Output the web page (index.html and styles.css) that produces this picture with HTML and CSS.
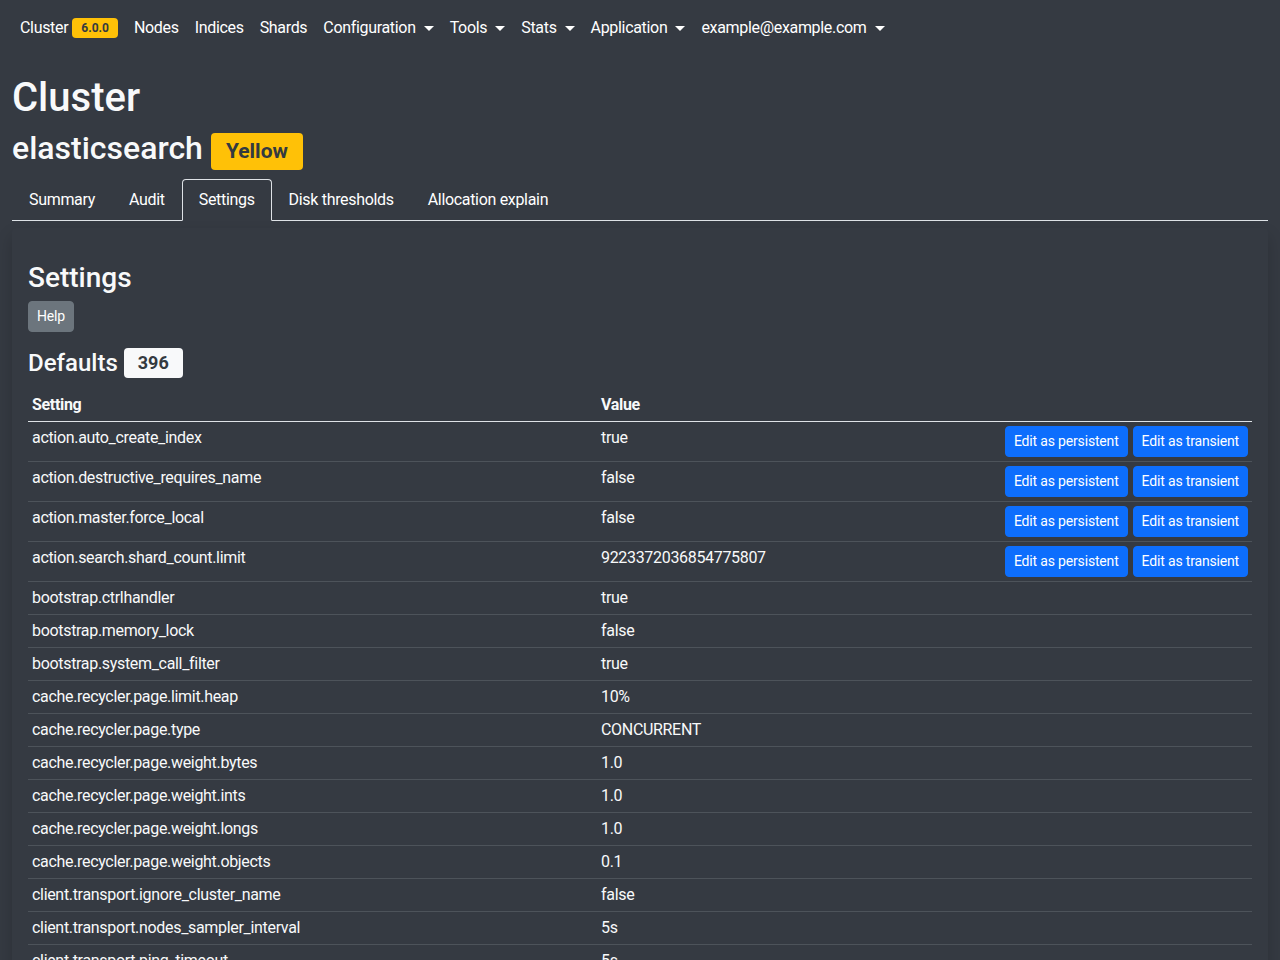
FILE: index.html
```html
<!DOCTYPE html>
<html lang="en">
<head>
<meta charset="utf-8">
<title>Cluster settings</title>
<link rel="stylesheet" href="styles.css">
</head>
<body>
<nav class="navbar">
  <a class="nav-link">Cluster <span class="badge badge-warning badge-nav">6.0.0</span></a>
  <a class="nav-link">Nodes</a>
  <a class="nav-link">Indices</a>
  <a class="nav-link">Shards</a>
  <a class="nav-link dropdown">Configuration</a>
  <a class="nav-link dropdown">Tools</a>
  <a class="nav-link dropdown">Stats</a>
  <a class="nav-link dropdown">Application</a>
  <a class="nav-link dropdown">example@example.com</a>
</nav>
<main class="container">
  <h1 class="title">Cluster</h1>
  <h2 class="subtitle">elasticsearch <span class="badge badge-warning badge-status">Yellow</span></h2>
  <ul class="tabs">
    <li class="tab">Summary</li>
    <li class="tab">Audit</li>
    <li class="tab active">Settings</li>
    <li class="tab">Disk thresholds</li>
    <li class="tab">Allocation explain</li>
  </ul>
  <section class="card">
    <h3 class="card-title">Settings</h3>
    <div class="help-row"><button class="btn btn-secondary">Help</button></div>
    <h4 class="section-title">Defaults <span class="badge badge-light">396</span></h4>
    <table class="table">
      <thead>
        <tr><th class="col-setting">Setting</th><th class="col-value">Value</th><th></th></tr>
      </thead>
      <tbody>
        <tr><td>action.auto_create_index</td><td>true</td><td class="actions"><button class="btn btn-primary">Edit as persistent</button><button class="btn btn-primary">Edit as transient</button></td></tr>
        <tr><td>action.destructive_requires_name</td><td>false</td><td class="actions"><button class="btn btn-primary">Edit as persistent</button><button class="btn btn-primary">Edit as transient</button></td></tr>
        <tr><td>action.master.force_local</td><td>false</td><td class="actions"><button class="btn btn-primary">Edit as persistent</button><button class="btn btn-primary">Edit as transient</button></td></tr>
        <tr><td>action.search.shard_count.limit</td><td>9223372036854775807</td><td class="actions"><button class="btn btn-primary">Edit as persistent</button><button class="btn btn-primary">Edit as transient</button></td></tr>
        <tr><td>bootstrap.ctrlhandler</td><td>true</td><td></td></tr>
        <tr><td>bootstrap.memory_lock</td><td>false</td><td></td></tr>
        <tr><td>bootstrap.system_call_filter</td><td>true</td><td></td></tr>
        <tr><td>cache.recycler.page.limit.heap</td><td>10%</td><td></td></tr>
        <tr><td>cache.recycler.page.type</td><td>CONCURRENT</td><td></td></tr>
        <tr><td>cache.recycler.page.weight.bytes</td><td>1.0</td><td></td></tr>
        <tr><td>cache.recycler.page.weight.ints</td><td>1.0</td><td></td></tr>
        <tr><td>cache.recycler.page.weight.longs</td><td>1.0</td><td></td></tr>
        <tr><td>cache.recycler.page.weight.objects</td><td>0.1</td><td></td></tr>
        <tr><td>client.transport.ignore_cluster_name</td><td>false</td><td></td></tr>
        <tr><td>client.transport.nodes_sampler_interval</td><td>5s</td><td></td></tr>
        <tr><td>client.transport.ping_timeout</td><td>5s</td><td></td></tr>
      </tbody>
    </table>
  </section>
</main>
</body>
</html>
```
FILE: styles.css
```css
* { box-sizing: border-box; }
html, body { margin: 0; padding: 0; }
body {
  background: #353a42;
  color: #f8f9fa;
  font-family: Roboto, "Liberation Sans", Arial, sans-serif;
  font-size: 16px;
  line-height: 1.5;
  letter-spacing: -0.02em;
  overflow: hidden;
  height: 960px;
}
.navbar {
  display: flex;
  align-items: center;
  height: 56px;
  padding: 0 12px;
}
.nav-link {
  padding: 0 8px;
  color: #fff;
  white-space: nowrap;
  display: flex;
  align-items: center;
}
.dropdown::after {
  content: "";
  display: inline-block;
  margin-left: 8px;
  border-top: 5px solid #fff;
  border-left: 5px solid transparent;
  border-right: 5px solid transparent;
}
.badge {
  display: inline-block;
  font-weight: 700;
  line-height: 1;
  border-radius: 4px;
  text-align: center;
  white-space: nowrap;
  letter-spacing: 0;
}
.badge-warning { background: #ffc107; color: #343a40; }
.badge-light { background: #f8f9fa; color: #343a40; }
.badge-nav {
  font-size: 12px;
  padding: 4px 9px;
  margin-left: 4px;
}
.container { padding: 18px 12px 0; }
.title {
  margin: 0 0 7px;
  font-size: 40px;
  font-weight: 500;
  line-height: 1.2;
  letter-spacing: 0;
}
.subtitle {
  margin: 0 0 12px;
  font-size: 32px;
  font-weight: 500;
  line-height: 1.2;
  letter-spacing: 0;
  display: flex;
  align-items: center;
}
.badge-status {
  font-size: 21px;
  padding: 8px 15px;
  margin: 3px 0 -3px 8px;
}
.tabs {
  list-style: none;
  margin: 0;
  padding: 0;
  display: flex;
  border-bottom: 1px solid #dee2e6;
}
.tab {
  padding: 8px 16px;
  border: 1px solid transparent;
  border-top-left-radius: 4px;
  border-top-right-radius: 4px;
  margin-bottom: -1px;
  color: #fff;
}
.tab.active {
  border-color: #dee2e6 #dee2e6 #353a42;
}
.card {
  margin-top: 7px;
  padding: 33px 16px 16px;
  background: #353a42;
  box-shadow: 0 8px 16px rgba(0, 0, 0, 0.18);
  border-radius: 4px;
}
.card-title {
  margin: 0 0 6px;
  font-size: 28px;
  font-weight: 500;
  line-height: 1.2;
  letter-spacing: 0;
}
.help-row { margin-bottom: 16px; }
.btn {
  font-family: inherit;
  font-size: 14px;
  line-height: 1.5;
  letter-spacing: -0.012em;
  padding: 4px 8px;
  border: 1px solid transparent;
  border-radius: 4px;
  color: #fff;
}
.btn-secondary { background: #6c757d; border-color: #6c757d; }
.btn-primary { background: #0d6efd; border-color: #0d6efd; }
.section-title {
  margin: 0 0 11px;
  font-size: 24px;
  font-weight: 500;
  line-height: 1.2;
  letter-spacing: 0;
  display: flex;
  align-items: center;
}
.badge-light {
  font-size: 18px;
  padding: 6px 14px;
  margin-left: 6px;
}
.table {
  width: 100%;
  border-collapse: collapse;
  color: #f8f9fa;
}
.table th, .table td {
  padding: 4px;
  text-align: left;
  vertical-align: top;
  border-bottom: 1px solid #4d535a;
}
.table thead th {
  font-weight: 700;
  border-bottom: 1px solid #dee2e6;
  vertical-align: bottom;
}
.col-setting { width: 569px; }
.actions {
  text-align: right !important;
  white-space: nowrap;
}
.actions .btn + .btn { margin-left: 5px; }
```
